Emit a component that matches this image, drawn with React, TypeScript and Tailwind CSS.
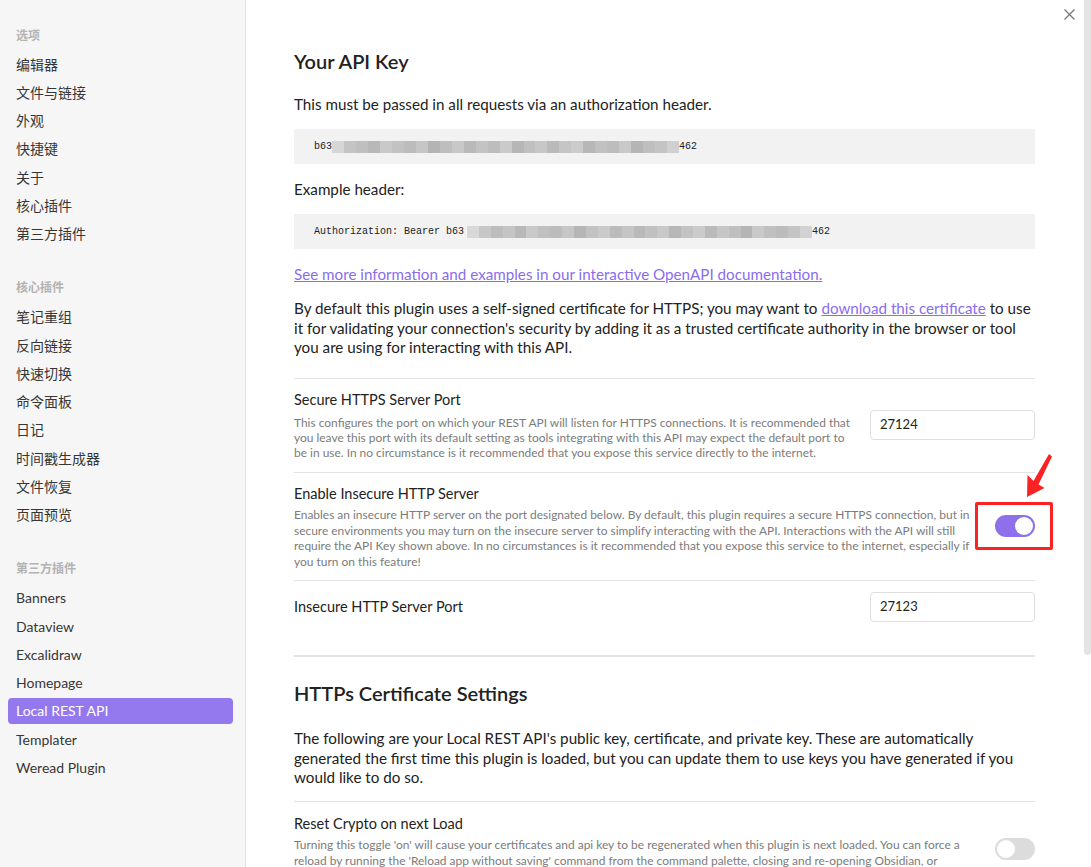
import React from 'react';

const FONT = { fontFamily: 'Lato, "Noto Sans CJK SC", sans-serif' };

const G1 = ['#d6d6d6','#c4c4c4','#bfbfbf','#b8b8b8','#c9c9c9','#c2c2c2','#bcbcbc','#c6c6c6','#b4b4b4','#bebebe','#c8c8c8','#b9b9b9','#c3c3c3','#bdbdbd','#cacaca','#b6b6b6','#c0c0c0','#c7c7c7','#bababa','#c5c5c5','#cbcbcb','#b7b7b7','#c1c1c1','#bdbdbd','#c9c9c9','#b5b5b5','#bfbfbf','#c4c4c4','#d0d0d0'];
const G2 = ['#d8d8d8','#c7c7c7','#bdbdbd','#c4c4c4','#b8b8b8','#c9c9c9','#c0c0c0','#bcbcbc','#c6c6c6','#b6b6b6','#c2c2c2','#cacaca','#bbbbbb','#c5c5c5','#b9b9b9','#c1c1c1','#c8c8c8','#b7b7b7','#c3c3c3','#cbcbcb','#bababa','#c6c6c6','#bfbfbf','#b5b5b5','#c9c9c9','#c0c0c0','#bcbcbc','#c4c4c4','#d2d2d2'];

function Mosaic({ colors, width }: { colors: string[]; width: number }) {
  return (
    <span className="inline-flex h-[12px] shrink-0" style={{ width }}>
      {colors.map((c, i) => (
        <span key={i} className="h-full flex-1" style={{ backgroundColor: c }} />
      ))}
    </span>
  );
}

const sections: { title: string; items: string[] }[] = [
  { title: '选项', items: ['编辑器', '文件与链接', '外观', '快捷键', '关于', '核心插件', '第三方插件'] },
  { title: '核心插件', items: ['笔记重组', '反向链接', '快速切换', '命令面板', '日记', '时间戳生成器', '文件恢复', '页面预览'] },
  { title: '第三方插件', items: ['Banners', 'Dataview', 'Excalidraw', 'Homepage', 'Local REST API', 'Templater', 'Weread Plugin'] },
];

function Sidebar() {
  return (
    <div className="w-[246px] shrink-0 h-full bg-[#f6f6f6] border-r border-[#e3e3e3] pt-[21px]">
      {sections.map((s, si) => (
        <div key={s.title} className={si > 0 ? 'mt-[26px]' : ''}>
          <div className="h-[29px] flex items-center pl-[16px] text-[12px] font-bold text-[#b3b3b3]">{s.title}</div>
          {s.items.map((it) => {
            const active = it === 'Local REST API';
            return (
              <div key={it} className="h-[28.25px] py-[1px] pl-[8px] pr-[12px]">
                <div
                  className={
                    'h-full rounded-[4px] px-[8px] flex items-center text-[14px] ' +
                    (active ? 'bg-[#9479ee] text-white' : 'text-[#363636]')
                  }
                >
                  {it}
                </div>
              </div>
            );
          })}
        </div>
      ))}
    </div>
  );
}

function Toggle({ on }: { on: boolean }) {
  return (
    <div
      className={
        'w-[40px] h-[22px] rounded-full relative shrink-0 ' + (on ? 'bg-[#8d70ea]' : 'bg-[#dcdcdc]')
      }
    >
      <div
        className={
          'absolute top-[2px] w-[18px] h-[18px] rounded-full bg-white ' + (on ? 'left-[20px]' : 'left-[2px]')
        }
      />
    </div>
  );
}

function PortInput({ value }: { value: string }) {
  return (
    <div className="w-[165px] h-[30px] shrink-0 rounded-[4px] border border-[#dedede] bg-white flex items-center pl-[9px] text-[13px] text-[#222]">
      {value}
    </div>
  );
}

export default function App() {
  return (
    <div className="relative w-[1091px] h-[867px] overflow-hidden flex bg-white" style={FONT}>
      <Sidebar />
      <div className="flex-1 h-full overflow-hidden">
        <div className="pl-[48px] pr-[49px] pt-[47px] text-[#222222]">
          <h2 className="text-[20px] leading-[28px] font-semibold text-[#222]">Your API Key</h2>
          <p className="mt-[19px] text-[15.2px] leading-[20px]">This must be passed in all requests via an authorization header.</p>
          <div className="mt-[15px] h-[35px] bg-[#f2f2f2] flex items-center pl-[20px] text-[10px] text-[#222]" style={{ fontFamily: '"Liberation Mono", monospace' }}>
            <span>b63</span>
            <Mosaic colors={G1} width={347} />
            <span>462</span>
          </div>
          <p className="mt-[15px] text-[15.2px] leading-[20px]">Example header:</p>
          <div className="mt-[15px] h-[35px] bg-[#f2f2f2] flex items-center pl-[20px] text-[10px] text-[#222]" style={{ fontFamily: '"Liberation Mono", monospace' }}>
            <span className="whitespace-pre">Authorization: Bearer b63</span>
            <span className="ml-[3px] flex">
              <Mosaic colors={G2} width={345} />
            </span>
            <span>462</span>
          </div>
          <p className="mt-[15px] text-[15.2px] leading-[20px]">
            <span className="text-[#8a6ded] underline">See more information and examples in our interactive OpenAPI documentation.</span>
          </p>
          <p className="mt-[15px] text-[15.2px] leading-[19.5px]">
            By default this plugin uses a self-signed certificate for HTTPS; you may want to{' '}
            <span className="text-[#8a6ded] underline">download this certificate</span> to use it for validating your
            connection's security by adding it as a trusted certificate authority in the browser or tool you are using
            for interacting with this API.
          </p>

          <div className="mt-[20.5px] border-t border-[#e3e3e3] flex items-center pt-[11px] pb-[12px]">
            <div className="flex-1 mr-[14px]">
              <div className="text-[14.5px] leading-[20px]">Secure HTTPS Server Port</div>
              <div className="mt-[4.5px] text-[11.95px] leading-[15px] text-[#7b7b7b]">
                This configures the port on which your REST API will listen for HTTPS connections. It is recommended that
                you leave this port with its default setting as tools integrating with this API may expect the default port
                to be in use. In no circumstance is it recommended that you expose this service directly to the internet.
              </div>
            </div>
            <PortInput value="27124" />
          </div>

          <div className="border-t border-[#e3e3e3] flex items-center pt-[11px] pb-[11px]">
            <div className="flex-1 mr-[10px]">
              <div className="text-[14.5px] leading-[20px]">Enable Insecure HTTP Server</div>
              <div className="mt-[3.5px] text-[11.95px] leading-[15.5px] text-[#7b7b7b]">
                Enables an insecure HTTP server on the port designated below. By default, this plugin requires a secure
                HTTPS connection, but in secure environments you may turn on the insecure server to simplify interacting
                with the API. Interactions with the API will still require the API Key shown above. In no circumstances is
                it recommended that you expose this service to the internet, especially if you turn on this feature!
              </div>
            </div>
            <Toggle on />
          </div>

          <div className="border-t border-[#e3e3e3] flex items-center pt-[11px] pb-[12px]">
            <div className="flex-1 mr-[14px] text-[14.5px] leading-[20px]">Insecure HTTP Server Port</div>
            <PortInput value="27123" />
          </div>

          <div className="mt-[21px] border-t-2 border-[#e3e3e3]" />
          <h2 className="mt-[21.5px] text-[20px] leading-[28px] font-semibold text-[#222]">HTTPs Certificate Settings</h2>
          <p className="mt-[22.5px] text-[15.2px] leading-[19.5px]">
            The following are your Local REST API's public key, certificate, and private key. These are automatically
            generated the first time this plugin is loaded, but you can update them to use keys you have generated if
            you would like to do so.
          </p>

          <div className="mt-[13.5px] border-t border-[#e3e3e3] flex items-center pt-[11.5px] pb-[12px]">
            <div className="flex-1 mr-[30px]">
              <div className="text-[14.5px] leading-[20px]">Reset Crypto on next Load</div>
              <div className="mt-[3.5px] text-[11.95px] leading-[15.5px] text-[#7b7b7b]">
                Turning this toggle 'on' will cause your certificates and api key to be regenerated when this plugin is
                next loaded. You can force a reload by running the 'Reload app without saving' command from the command
                palette, closing and re-opening Obsidian, or turning this plugin off and on again.
              </div>
            </div>
            <Toggle on={false} />
          </div>
        </div>
      </div>
      <div className="w-[7px] h-full shrink-0 bg-white">
        <div className="w-full h-[655px] bg-[#e4e4e4] rounded-b-[4px]" />
      </div>

      {/* close button */}
      <div className="absolute left-[1063px] top-[8px] w-[13px] h-[13px] text-[#777]">
        <svg width="13" height="13" viewBox="0 0 13 13" fill="none" stroke="currentColor" strokeWidth="1.3">
          <path d="M1.5 1.5 L11.5 11.5 M11.5 1.5 L1.5 11.5" />
        </svg>
      </div>

      {/* red highlight box */}
      <div className="absolute left-[975px] top-[502px] w-[78px] h-[48px] border-[3px] border-[#fa2222] rounded-[2px]" />
      <svg className="absolute left-[1020px] top-[450px]" width="40" height="52" viewBox="1020 450 40 52">
        <polygon points="1027,497 1027.5,475 1033.5,481 1049,454 1052,456.5 1038.5,484.5 1044.5,488" fill="#fa2222" />
      </svg>
    </div>
  );
}
